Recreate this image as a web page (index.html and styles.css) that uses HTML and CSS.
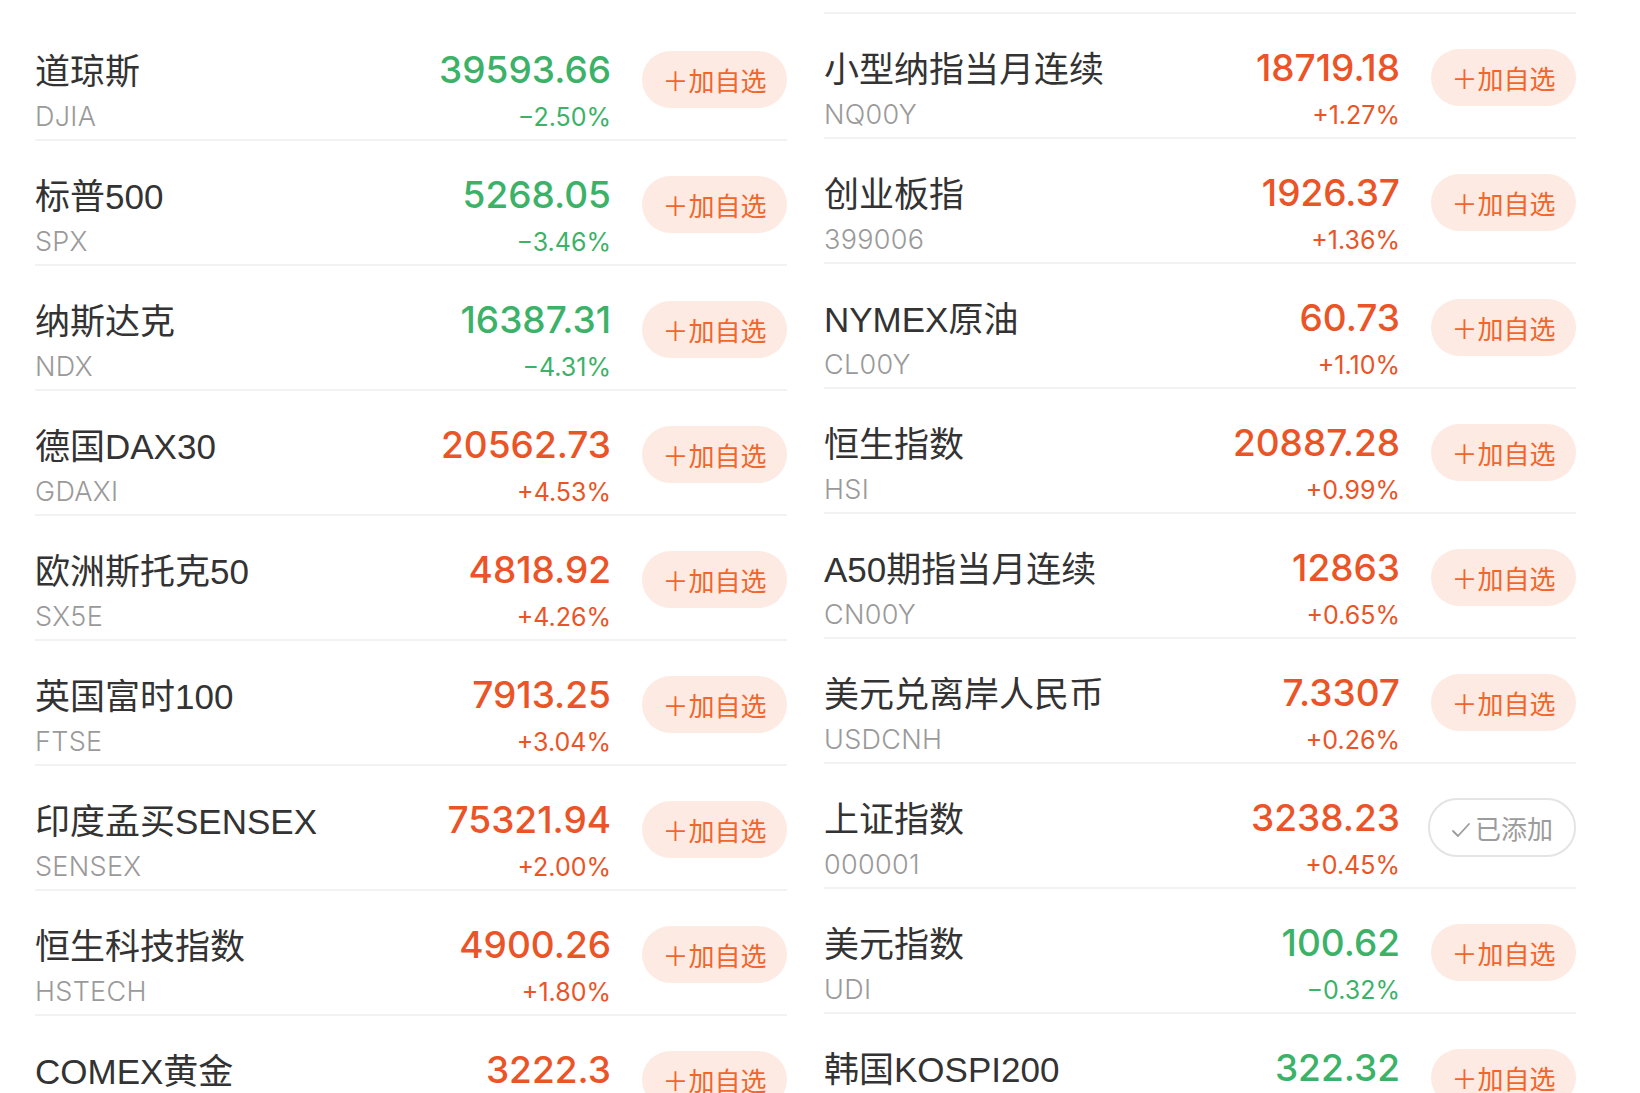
FILE: index.html
```html
<!DOCTYPE html>
<html lang="zh-CN">
<head>
<meta charset="utf-8">
<title>行情</title>
<link rel="stylesheet" href="styles.css">
</head>
<body>
<div class="board">
  <div class="col col-left">
    <div class="row">
      <div class="info"><div class="name">道琼斯</div><div class="code">DJIA</div></div>
      <div class="nums down"><div class="price">39593.66</div><div class="chg">−2.50%</div></div>
      <div class="btn">＋加自选</div>
    </div>
    <div class="row">
      <div class="info"><div class="name">标普500</div><div class="code">SPX</div></div>
      <div class="nums down"><div class="price">5268.05</div><div class="chg">−3.46%</div></div>
      <div class="btn">＋加自选</div>
    </div>
    <div class="row">
      <div class="info"><div class="name">纳斯达克</div><div class="code">NDX</div></div>
      <div class="nums down"><div class="price">16387.31</div><div class="chg">−4.31%</div></div>
      <div class="btn">＋加自选</div>
    </div>
    <div class="row">
      <div class="info"><div class="name">德国DAX30</div><div class="code">GDAXI</div></div>
      <div class="nums up"><div class="price">20562.73</div><div class="chg">+4.53%</div></div>
      <div class="btn">＋加自选</div>
    </div>
    <div class="row">
      <div class="info"><div class="name">欧洲斯托克50</div><div class="code">SX5E</div></div>
      <div class="nums up"><div class="price">4818.92</div><div class="chg">+4.26%</div></div>
      <div class="btn">＋加自选</div>
    </div>
    <div class="row">
      <div class="info"><div class="name">英国富时100</div><div class="code">FTSE</div></div>
      <div class="nums up"><div class="price">7913.25</div><div class="chg">+3.04%</div></div>
      <div class="btn">＋加自选</div>
    </div>
    <div class="row">
      <div class="info"><div class="name">印度孟买SENSEX</div><div class="code">SENSEX</div></div>
      <div class="nums up"><div class="price">75321.94</div><div class="chg">+2.00%</div></div>
      <div class="btn">＋加自选</div>
    </div>
    <div class="row">
      <div class="info"><div class="name">恒生科技指数</div><div class="code">HSTECH</div></div>
      <div class="nums up"><div class="price">4900.26</div><div class="chg">+1.80%</div></div>
      <div class="btn">＋加自选</div>
    </div>
    <div class="row">
      <div class="info"><div class="name">COMEX黄金</div><div class="code">&nbsp;</div></div>
      <div class="nums up"><div class="price">3222.3</div><div class="chg">&nbsp;</div></div>
      <div class="btn">＋加自选</div>
    </div>
  </div>

  <div class="col col-right">
    <div class="row">
      <div class="info"><div class="name">小型纳指当月连续</div><div class="code">NQ00Y</div></div>
      <div class="nums up"><div class="price">18719.18</div><div class="chg">+1.27%</div></div>
      <div class="btn">＋加自选</div>
    </div>
    <div class="row">
      <div class="info"><div class="name">创业板指</div><div class="code">399006</div></div>
      <div class="nums up"><div class="price">1926.37</div><div class="chg">+1.36%</div></div>
      <div class="btn">＋加自选</div>
    </div>
    <div class="row">
      <div class="info"><div class="name">NYMEX原油</div><div class="code">CL00Y</div></div>
      <div class="nums up"><div class="price">60.73</div><div class="chg">+1.10%</div></div>
      <div class="btn">＋加自选</div>
    </div>
    <div class="row">
      <div class="info"><div class="name">恒生指数</div><div class="code">HSI</div></div>
      <div class="nums up"><div class="price">20887.28</div><div class="chg">+0.99%</div></div>
      <div class="btn">＋加自选</div>
    </div>
    <div class="row">
      <div class="info"><div class="name">A50期指当月连续</div><div class="code">CN00Y</div></div>
      <div class="nums up"><div class="price">12863</div><div class="chg">+0.65%</div></div>
      <div class="btn">＋加自选</div>
    </div>
    <div class="row">
      <div class="info"><div class="name">美元兑离岸人民币</div><div class="code">USDCNH</div></div>
      <div class="nums up"><div class="price">7.3307</div><div class="chg">+0.26%</div></div>
      <div class="btn">＋加自选</div>
    </div>
    <div class="row">
      <div class="info"><div class="name">上证指数</div><div class="code">000001</div></div>
      <div class="nums up"><div class="price">3238.23</div><div class="chg">+0.45%</div></div>
      <div class="btn added"><svg class="check" viewBox="0 0 20 16" width="20" height="16"><polyline points="2,9 7,14 18,2" fill="none" stroke="#9c9c9c" stroke-width="1.8" stroke-linecap="round" stroke-linejoin="round"/></svg>已添加</div>
    </div>
    <div class="row">
      <div class="info"><div class="name">美元指数</div><div class="code">UDI</div></div>
      <div class="nums down"><div class="price">100.62</div><div class="chg">−0.32%</div></div>
      <div class="btn">＋加自选</div>
    </div>
    <div class="row">
      <div class="info"><div class="name">韩国KOSPI200</div><div class="code">&nbsp;</div></div>
      <div class="nums down"><div class="price">322.32</div><div class="chg">&nbsp;</div></div>
      <div class="btn">＋加自选</div>
    </div>
  </div>
</div>
</body>
</html>
```

FILE: styles.css
```css
html, body {
  margin: 0;
  padding: 0;
  background: #ffffff;
}

body {
  height: 1093px;
  overflow: hidden;
  font-family: "Liberation Sans", "Noto Sans CJK SC", sans-serif;
}

.board {
  display: grid;
  grid-template-columns: 752px 752px;
  column-gap: 37px;
  padding-left: 35px;
  align-items: start;
}

.col-left {
  padding-top: 16px;
}

.col-right {
  margin-top: 12px;
  border-top: 2px solid #f2f2f2;
}

.row {
  display: flex;
  align-items: flex-start;
  height: 125px;
  box-sizing: border-box;
  border-bottom: 2px solid #f2f2f2;
}

.info {
  flex: 1;
  min-width: 0;
  padding-top: 34px;
}

.name {
  font-size: 35px;
  line-height: 44px;
  color: #333333;
  white-space: nowrap;
}

.code {
  margin-top: 6px;
  font-family: "Inter", "Noto Sans CJK SC", sans-serif;
  font-size: 27px;
  font-weight: 300;
  line-height: 34px;
  letter-spacing: 0.3px;
  color: #9a9a9a;
  white-space: nowrap;
}

.nums {
  padding-top: 32px;
  text-align: right;
  white-space: nowrap;
  font-family: "Inter", "Liberation Sans", sans-serif;
}

.price {
  font-size: 37px;
  line-height: 44px;
  font-weight: 500;
}

.chg {
  margin-top: 8px;
  font-size: 25px;
  line-height: 34px;
}

.up {
  color: #ea5426;
}

.down {
  color: #3cb269;
}

.btn {
  flex-shrink: 0;
  box-sizing: border-box;
  width: 145px;
  height: 57px;
  margin-left: 31px;
  margin-top: 35px;
  border-radius: 29px;
  background: #fdebe3;
  color: #f2652b;
  font-size: 26px;
  line-height: 1;
  display: flex;
  align-items: center;
  justify-content: center;
  font-family: "Noto Sans CJK SC", sans-serif;
}

.btn.added {
  width: 148px;
  height: 59px;
  margin-left: 28px;
  margin-top: 34px;
  border: 2px solid #e4e4e4;
  background: #ffffff;
  color: #9c9c9c;
  gap: 4px;
}

.check {
  display: block;
  margin-top: 4px;
}
```
